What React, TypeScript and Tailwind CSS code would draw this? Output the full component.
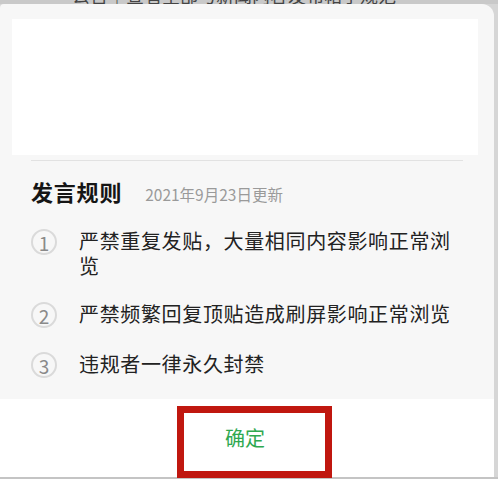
import React from "react";

const rules = [
  "严禁重复发贴，大量相同内容影响正常浏览",
  "严禁频繁回复顶贴造成刷屏影响正常浏览",
  "违规者一律永久封禁",
];

export default function App() {
  return (
    <div
      className="w-[498px] h-[479px] overflow-hidden bg-[#d6d6d6] flex flex-col"
      style={{ fontFamily: '"Noto Sans CJK SC", "Noto Sans", sans-serif' }}
    >
      {/* cut-off strip behind the sheet */}
      <div className="h-[4px] overflow-hidden bg-[#c9c9c9] shrink-0">
        <div className="-mt-[15px] pl-[72px] text-[18px] leading-[20px] text-[#444] whitespace-nowrap">
          公告｜查看全部与新闻内容发布帖子规范
        </div>
      </div>
      <div className="mr-[4px] rounded-tr-[12px] rounded-tl-[4px] bg-[#f7f7f7] flex flex-col flex-1">
        <div className="pt-[15px] pl-[12px] pr-[16px]">
          <div className="h-[136px] bg-white" />
        </div>
        <div className="ml-[31px] w-[432px] mt-[5px] h-px bg-[#e2e2e2]" />
        <div className="flex items-baseline pl-[31px] mt-[15px]">
          <span className="text-[22px] leading-[30px] font-bold text-[#151515] tracking-[0.8px]">
            发言规则
          </span>
          <span className="ml-[23px] text-[15.5px] text-[#9a9a9a]">2021年9月23日更新</span>
        </div>
        <div className="flex flex-col pl-[31px] mt-[23px] gap-[24px] pb-[21px]">
          {rules.map((r, i) => (
            <div key={i} className="flex items-start">
              <div className="w-[26px] h-[26px] rounded-full border-2 border-[#dadada] flex items-center justify-center text-[19px] text-[#8a8a8a] shrink-0 leading-none">
                {i + 1}
              </div>
              <div className="ml-[22px] w-[380px] text-[20px] leading-[24.5px] text-[#222] tracking-[0.65px]">
                {r}
              </div>
            </div>
          ))}
        </div>
        <div className="flex-1 bg-white relative flex items-center">
          <div className="w-[490px] text-center text-[20px] text-[#2fa84f]">确定</div>
          <div className="absolute left-[177px] top-[7px] w-[155px] h-[72px] border-[7.5px] border-[#c0170f]" />
        </div>
      </div>
      <div className="h-[2px] bg-[#c4c4c4] shrink-0" />
    </div>
  );
}
